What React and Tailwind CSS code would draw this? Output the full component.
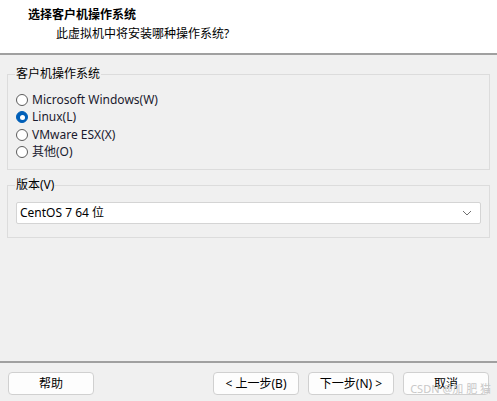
import React, { useState } from 'react';

const font = { fontFamily: '"Noto Sans", "Noto Sans CJK SC", sans-serif' };

function Radio({ label, checked, onSelect }) {
  return (
    <label className="flex items-center h-[17.5px] cursor-default" onClick={onSelect}>
      <span
        className={`w-[12px] h-[12px] rounded-full border flex items-center justify-center ${
          checked ? 'border-[#005fb8] bg-[#005fb8]' : 'border-[#5c5c5c] bg-white'
        }`}
      >
        {checked && <span className="w-[5px] h-[5px] rounded-full bg-white" />}
      </span>
      <span className="ml-[4px] text-[12px] text-[#1a1a2e]">{label}</span>
    </label>
  );
}

function Btn({ children, className = '' }) {
  return (
    <button className={`w-[86px] h-[23px] rounded-[4px] border border-[#d0d0d0] bg-[#fdfdfd] text-[12px] text-black ${className}`}>
      {children}
    </button>
  );
}

function App() {
  const [os, setOs] = useState('linux');
  const options = [
    ['win', 'Microsoft Windows(W)'],
    ['linux', 'Linux(L)'],
    ['esx', 'VMware ESX(X)'],
    ['other', '其他(O)'],
  ];

  return (
    <div className="w-[497px] h-[401px] bg-[#f0f0f0] flex flex-col relative overflow-hidden" style={font}>
      <div className="h-[55px] bg-white pt-[6px] text-[12px] text-black border-b-2 border-[#a0a0a0]">
        <div className="pl-[28px] font-bold leading-[18px]">选择客户机操作系统</div>
        <div className="pl-[56px] leading-[18px] mt-[1px]">此虚拟机中将安装哪种操作系统?</div>
      </div>

      <div className="px-[7px] pt-[12px] flex flex-col">
        <fieldset className="border border-[#dcdcdc] h-[103px] pl-[8px] pt-[10px] m-0">
          <legend className="text-[12px] text-black px-[1px] ml-[-1px] leading-[14px]">客户机操作系统</legend>
          {options.map(([k, l]) => (
            <Radio key={k} label={l} checked={os === k} onSelect={() => setOs(k)} />
          ))}
        </fieldset>

        <fieldset className="border border-[#dcdcdc] h-[60px] mt-[8px] px-[8px] pt-[10px] m-0">
          <legend className="text-[12px] text-black px-[1px] ml-[-1px] leading-[14px]">版本(V)</legend>
          <div className="h-[22px] bg-white border border-[#d4d4d4] rounded-[2px] flex items-center justify-between pl-[3px] pr-[8px]">
            <span className="text-[12px] text-black">CentOS 7 64 位</span>
            <svg width="10" height="6" viewBox="0 0 10 6">
              <path d="M1 1l4 4 4-4" fill="none" stroke="#707070" strokeWidth="1" />
            </svg>
          </div>
        </fieldset>
      </div>

      <div className="flex-1" />

      <div className="border-t-2 border-[#a0a0a0] h-[40px] flex items-start pt-[9px] px-[8px]">
        <Btn>帮助</Btn>
        <div className="flex-1" />
        <Btn>&lt; 上一步(B)</Btn>
        <Btn className="ml-[9px]">下一步(N) &gt;</Btn>
        <Btn className="ml-[9px]">取消</Btn>
      </div>

      <div className="absolute right-[6px] bottom-[7px] text-[11px] text-[#c8c8c8] leading-none">CSDN @加 肥 猫</div>
    </div>
  );
}

export default App;
